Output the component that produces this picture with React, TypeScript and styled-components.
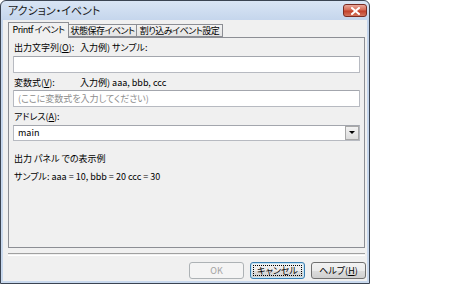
import React from "react";
import styled, { createGlobalStyle, css } from "styled-components";

const GlobalStyle = createGlobalStyle`
  html, body {
    margin: 0;
    padding: 0;
    background: #ffffff;
  }
  body {
    font-family: "Noto Sans CJK JP", "Noto Sans", sans-serif;
    font-size: 9px;
    color: #000;
    font-feature-settings: "palt";
  }
`;

const Window = styled.div`
  display: flex;
  flex-direction: column;
  box-sizing: border-box;
  width: 370px;
  height: 284px;
  padding: 0 2px 2px 2px;
  border: 1px solid #3b4452;
  border-radius: 6px 6px 0 0;
  background: linear-gradient(180deg, #d9e5f4 0px, #c4d5ec 20px, #c9d9ee 100%);
  box-shadow: 0 1px 0 #62b3d6;
`;

const TitleBar = styled.div`
  display: flex;
  align-items: flex-start;
  justify-content: space-between;
  height: 19px;
  padding-left: 5px;
`;

const Title = styled.span`
  font-size: 11px;
  line-height: 19px;
  color: #1a1a1a;
`;

const CloseButton = styled.div`
  display: flex;
  align-items: center;
  justify-content: center;
  box-sizing: border-box;
  width: 24px;
  height: 13px;
  margin-top: 3px;
  border: 1px solid #7a2b22;
  border-radius: 3px;
  background: linear-gradient(180deg, #e9a89c 0%, #d56a55 45%, #c2402a 55%, #d4765e 100%);
`;

const Client = styled.div`
  display: flex;
  flex-direction: column;
  flex: 1;
  padding: 2px 0 0 5px;
  background: #f0f0f0;
`;

const TabStrip = styled.div`
  display: flex;
  align-items: flex-end;
  height: 15px;
`;

const Tab = styled.div<{ $w: number; $active?: boolean }>`
  position: relative;
  box-sizing: border-box;
  width: ${(p) => p.$w}px;
  height: ${(p) => (p.$active ? 16 : 13)}px;
  margin-bottom: ${(p) => (p.$active ? -1 : 0)}px;
  border: 1px solid #8c8e94;
  border-bottom: ${(p) => (p.$active ? "none" : "1px solid #8c8e94")};
  border-left-width: ${(p) => (p.$active ? 1 : 0)}px;
  z-index: ${(p) => (p.$active ? 1 : 0)};
  padding: 0 1px;
  letter-spacing: -0.5px;
  text-align: center;
  line-height: ${(p) => (p.$active ? 14 : 12)}px;
  white-space: nowrap;
  ${(p) =>
    p.$active
      ? css`
          background: #f0f0f0;
        `
      : css`
          background: linear-gradient(180deg, #f2f2f2 0%, #e4e4e4 100%);
        `}
`;

const Panel = styled.div`
  display: flex;
  flex-direction: column;
  box-sizing: border-box;
  width: 357px;
  height: 211px;
  padding: 3px 4px 0 4px;
  border: 1px solid #8c8e94;
  background: #f0f0f0;
`;

const LabelRow = styled.div<{ $top?: number }>`
  display: flex;
  height: 14px;
  margin-top: ${(p) => p.$top ?? 0}px;
  padding-left: 1px;
  line-height: 14px;
  white-space: nowrap;
`;

const LabelKey = styled.span`
  width: 66px;
`;

const TextBox = styled.div<{ $placeholder?: boolean; $top?: number }>`
  box-sizing: border-box;
  height: 17px;
  margin-top: ${(p) => p.$top ?? 0}px;
  padding-left: 4px;
  border: 1px solid #b7bac1;
  border-top-color: #a3a6ad;
  border-radius: 1px;
  background: #ffffff;
  color: ${(p) => (p.$placeholder ? "#8d8d8d" : "#000")};
  line-height: 15px;
  white-space: nowrap;
`;

const Combo = styled.div`
  display: flex;
  align-items: center;
  justify-content: space-between;
  box-sizing: border-box;
  height: 16px;
  margin-top: 1px;
  padding: 0 0 0 4px;
  border: 1px solid #b7bac1;
  border-top-color: #a3a6ad;
  background: #ffffff;
  line-height: 14px;
`;

const DropButton = styled.div`
  display: flex;
  align-items: center;
  justify-content: center;
  box-sizing: border-box;
  width: 14px;
  height: 14px;
  border: 1px solid #a8a8a8;
  background: linear-gradient(180deg, #f2f2f2 0%, #dcdcdc 100%);
`;

const Separator = styled.div`
  width: 357px;
  height: 1px;
  margin-top: 5px;
  border-top: 1px solid #a0a0a0;
  border-bottom: 1px solid #ffffff;
`;

const ButtonRow = styled.div`
  display: flex;
  justify-content: flex-end;
  gap: 6px;
  width: 358px;
  margin-top: 6px;
`;

const DialogButton = styled.div<{ $state?: "disabled" | "default" }>`
  display: flex;
  align-items: center;
  justify-content: center;
  box-sizing: border-box;
  width: 55px;
  height: 17px;
  border: 1px solid #707070;
  border-radius: 3px;
  background: linear-gradient(180deg, #f2f2f2 0%, #ebebeb 50%, #dddddd 51%, #cfcfcf 100%);
  line-height: 14px;
  white-space: nowrap;
  ${(p) =>
    p.$state === "disabled" &&
    css`
      border-color: #adb2b5;
      background: #f4f4f4;
      color: #a3a3a3;
    `}
  ${(p) =>
    p.$state === "default" &&
    css`
      border-color: #3c7fb1;
      box-shadow: inset 0 0 0 1px #c4e5f6;
    `}
`;

const FocusRect = styled.span`
  box-sizing: border-box;
  width: 49px;
  height: 11px;
  border: 1px dotted #000;
  text-align: center;
  line-height: 9px;
  white-space: nowrap;
`;

export default function App() {
  return (
    <>
      <GlobalStyle />
      <Window>
        <TitleBar>
          <Title>アクション・イベント</Title>
          <CloseButton>
            <svg width="9" height="8" viewBox="0 0 9 8">
              <path d="M1 1 L8 7 M8 1 L1 7" stroke="#fff" strokeWidth="2" strokeLinecap="square" />
            </svg>
          </CloseButton>
        </TitleBar>
        <Client>
          <TabStrip>
            <Tab $w={61} $active>Printf イベント</Tab>
            <Tab $w={68}>状態保存イベント</Tab>
            <Tab $w={86}>割り込みイベント設定</Tab>
          </TabStrip>
          <Panel>
            <LabelRow>
              <LabelKey>出力文字列(<u>O</u>):</LabelKey>
              <span>入力例) サンプル:</span>
            </LabelRow>
            <TextBox $top={1} />
            <LabelRow $top={3}>
              <LabelKey>変数式(<u>V</u>):</LabelKey>
              <span>入力例) aaa, bbb, ccc</span>
            </LabelRow>
            <TextBox $placeholder>(ここに変数式を入力してください)</TextBox>
            <LabelRow $top={3}>
              <LabelKey>アドレス(<u>A</u>):</LabelKey>
            </LabelRow>
            <Combo>
              <span>main</span>
              <DropButton>
                <svg width="6" height="4" viewBox="0 0 6 4">
                  <path d="M0 0 H6 L3 3 Z" fill="#000" />
                </svg>
              </DropButton>
            </Combo>
            <LabelRow $top={11}>出力 パネル での表示例</LabelRow>
            <LabelRow $top={4}>サンプル: aaa = 10, bbb = 20 ccc = 30</LabelRow>
          </Panel>
          <Separator />
          <ButtonRow>
            <DialogButton $state="disabled">OK</DialogButton>
            <DialogButton $state="default">
              <FocusRect>キャンセル</FocusRect>
            </DialogButton>
            <DialogButton>ヘルプ(<u>H</u>)</DialogButton>
          </ButtonRow>
        </Client>
      </Window>
    </>
  );
}
